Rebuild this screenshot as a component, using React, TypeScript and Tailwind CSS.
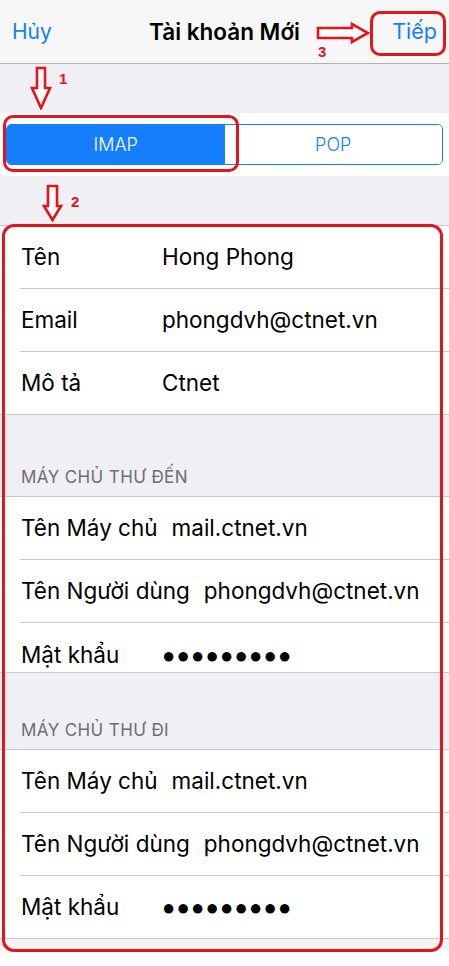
import type { ReactNode } from "react";

const font = { fontFamily: "Inter, 'Noto Sans', sans-serif" };
const red = "#e3141b";

type RowProps = { label: string; value: ReactNode; short?: boolean };

// one settings row: label column + value
function Row({ label, value, short }: RowProps) {
  return (
    <div className={`flex pl-[21px] ${short ? "h-[49px] items-start pt-[18px]" : "h-[62px] items-center"}`}>
      <span className="min-w-[127px] mr-[14px] text-[22.5px] leading-[28px] text-black whitespace-nowrap">{label}</span>
      <span className="text-[22.5px] leading-[28px] text-black whitespace-nowrap">{value}</span>
    </div>
  );
}

function Divider() {
  return <div className="ml-[20px] h-px bg-[#c8c7cc]" />;
}

function Dots() {
  return (
    <span className="text-[22px] tracking-[1.2px]" style={{ fontFamily: "'Liberation Sans', sans-serif" }}>
      ●●●●●●●●●
    </span>
  );
}

function SectionHeader({ title, height }: { title: string; height: string }) {
  return (
    <div className={`${height} flex flex-col justify-end pb-[9px] pl-[21px] bg-[#efeff4] border-y border-[#c8c7cc]`}>
      <span className="text-[17px] leading-[20px] text-[#6d6d72] tracking-[0.4px]">{title}</span>
    </div>
  );
}

export default function App() {
  return (
    <div className="relative w-[449px] h-[966px] bg-white overflow-hidden" style={font}>
      {/* nav bar */}
      <div className="h-[64px] bg-[#f7f7f7] border-b border-[#b2b2b2] flex items-center justify-between px-[12px]">
        <span className="text-[21px] text-[#147efb]">Hủy</span>
        <span className="absolute left-0 right-0 text-center text-[22.5px] font-semibold text-black pointer-events-none">
          Tài khoản Mới
        </span>
        <span className="text-[21.5px] text-[#147efb]">Tiếp</span>
      </div>

      <div className="h-[49px] bg-[#efeff4]" />

      {/* account type */}
      <div className="bg-white py-[11px] px-[6px]">
        <div className="flex h-[41px] rounded-[5px] border border-[#147efb] overflow-hidden">
          <div className="flex-1 bg-[#147efb] flex items-center justify-center text-white text-[18px] font-light">IMAP</div>
          <div className="flex-1 bg-white flex items-center justify-center text-[#147efb] text-[18px] font-light">POP</div>
        </div>
      </div>

      <div className="h-[50px] bg-[#efeff4] border-b border-[#c8c7cc]" />

      {/* account info */}
      <div className="bg-white">
        <Row label="Tên" value="Hong Phong" />
        <Divider />
        <Row label="Email" value="phongdvh@ctnet.vn" />
        <Divider />
        <Row label="Mô tả" value="Ctnet" />
      </div>

      <SectionHeader title="MÁY CHỦ THƯ ĐẾN" height="h-[83px]" />
      <div className="bg-white">
        <Row label="Tên Máy chủ" value="mail.ctnet.vn" />
        <Divider />
        <Row label="Tên Người dùng" value="phongdvh@ctnet.vn" />
        <Divider />
        <Row label="Mật khẩu" value={<Dots />} short />
      </div>

      <SectionHeader title="MÁY CHỦ THƯ ĐI" height="h-[78px]" />
      <div className="bg-white border-b border-[#c8c7cc]">
        <Row label="Tên Máy chủ" value="mail.ctnet.vn" />
        <Divider />
        <Row label="Tên Người dùng" value="phongdvh@ctnet.vn" />
        <Divider />
        <Row label="Mật khẩu" value={<Dots />} />
      </div>
      <div className="h-[11px] bg-[#f3f3f6]" />

      {/* annotations */}
      <div className="absolute left-[370px] top-[11px] w-[76px] h-[45px] rounded-[10px] border-[3px] border-[#e3141b]" />
      <div className="absolute left-[3px] top-[115px] w-[236px] h-[57px] rounded-[10px] border-[3px] border-[#e3141b]" />
      <div className="absolute left-[2px] top-[224px] w-[441px] h-[728px] rounded-[12px] border-[3px] border-[#e3141b]" />

      <svg className="absolute left-[30px] top-[66px]" width="22" height="44" viewBox="0 0 22 44">
        <polygon points="7,2 15,2 15,22 20,22 11,42 2,22 7,22" fill="white" stroke={red} strokeWidth="2.6" />
      </svg>
      <span className="absolute left-[59px] top-[68px] text-[15px] font-bold text-[#e3141b]" style={{ fontFamily: "'Liberation Sans', sans-serif" }}>1</span>

      <svg className="absolute left-[42px] top-[184px]" width="22" height="38" viewBox="0 0 22 38">
        <polygon points="6,2 15,2 15,22 19,22 10.5,36 2,22 6,22" fill="white" stroke={red} strokeWidth="2.6" />
      </svg>
      <span className="absolute left-[71px] top-[191px] text-[15px] font-bold text-[#e3141b]" style={{ fontFamily: "'Liberation Sans', sans-serif" }}>2</span>

      <svg className="absolute left-[316px] top-[22px]" width="54" height="22" viewBox="0 0 54 22">
        <polygon points="2,6 36,6 36,2 52,11 36,20 36,16 2,16" fill="white" stroke={red} strokeWidth="2.6" />
      </svg>
      <span className="absolute left-[318px] top-[41px] text-[15px] font-bold text-[#e3141b]" style={{ fontFamily: "'Liberation Sans', sans-serif" }}>3</span>
    </div>
  );
}
